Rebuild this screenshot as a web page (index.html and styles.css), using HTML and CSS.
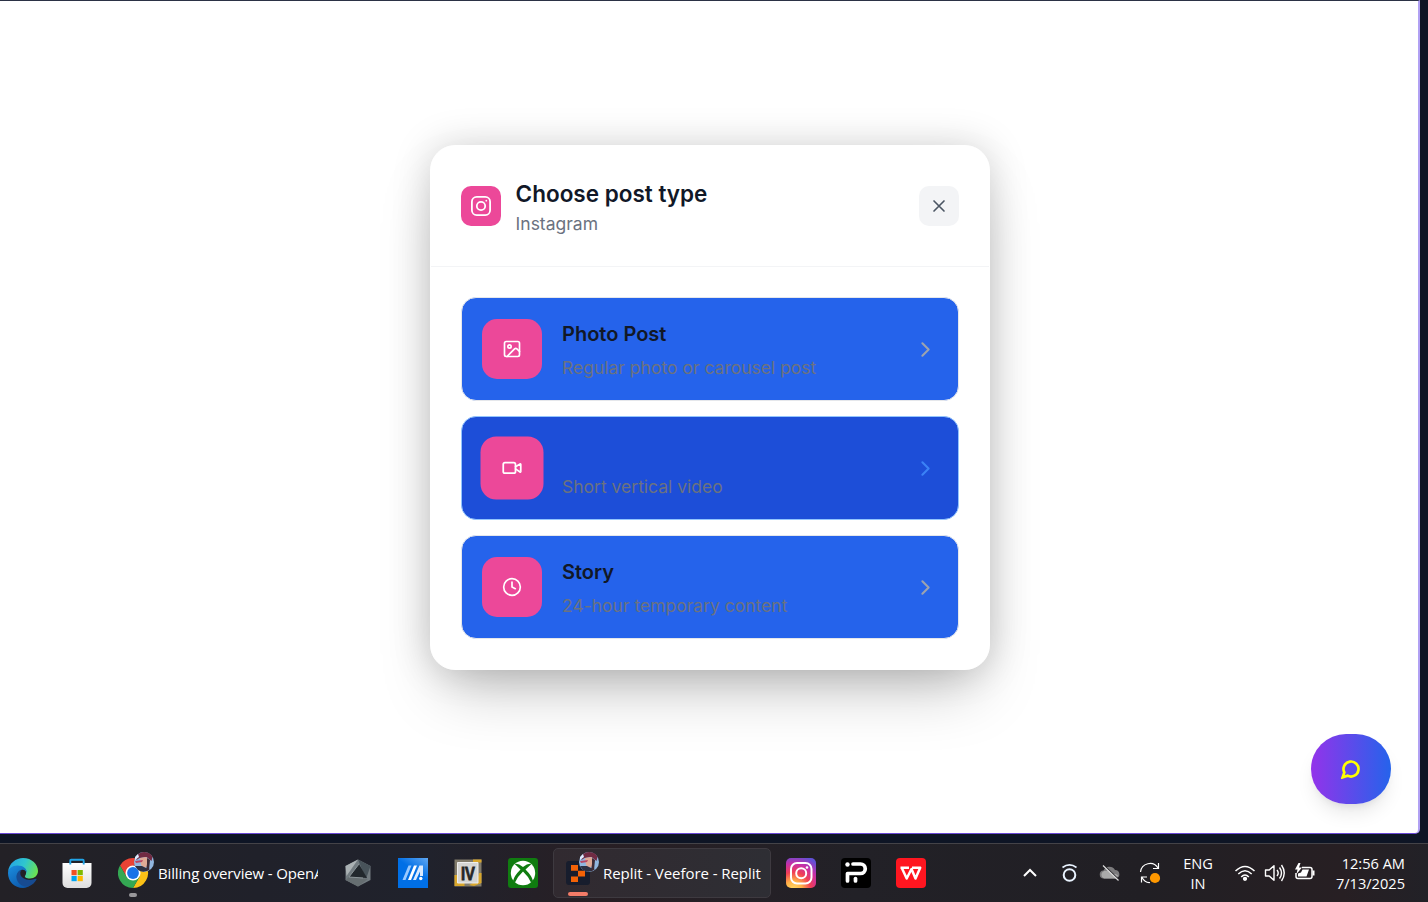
FILE: index.html
```html
<!DOCTYPE html>
<html lang="en">
<head>
<meta charset="utf-8">
<title>Veefore</title>
<link rel="stylesheet" href="styles.css">
</head>
<body>
<main class="viewport">
  <section class="modal">
    <header class="modal-header">
      <span class="brand"><svg width="24" height="24" viewBox="0 0 24 24" class="line"><rect x="2.900" y="2.900" width="18.200" height="18.200" rx="4.800"/><circle cx="12" cy="12" r="4.200"/><path d="M17.300 6.700h.01"/></svg></span>
      <div class="heading"><h1>Choose post type</h1><p>Instagram</p></div>
      <button class="close" aria-label="Close"><svg width="20" height="20" viewBox="0 0 24 24" class="line"><path d="M18 6 6 18M6 6l12 12"/></svg></button>
    </header>
    <div class="options">
      <button class="option">
        <span class="tile"><svg width="20" height="20" viewBox="0 0 24 24" class="line"><rect x="3" y="3" width="18" height="18" rx="2"/><circle cx="9" cy="9" r="2"/><path d="m21 15-3.090-3.090a2 2 0 0 0-2.820 0L6 21"/></svg></span>
        <span class="copy"><strong>Photo Post</strong><small>Regular photo or carousel post</small></span>
        <svg class="line arrow" width="25" height="25" viewBox="0 0 24 24"><path d="m9 18 6-6-6-6"/></svg>
      </button>
      <button class="option active">
        <span class="tile"><svg width="20" height="20" viewBox="0 0 24 24" class="line"><path d="m16 13 5.223 3.482a.5.5 0 0 0 .777-.416V7.870a.5.5 0 0 0-.752-.432L16 10.500"/><rect x="2" y="6" width="14" height="12" rx="2"/></svg></span>
        <span class="copy"><strong>Reel</strong><small>Short vertical video</small></span>
        <svg class="line arrow" width="25" height="25" viewBox="0 0 24 24"><path d="m9 18 6-6-6-6"/></svg>
      </button>
      <button class="option">
        <span class="tile"><svg width="20" height="20" viewBox="0 0 24 24" class="line"><circle cx="12" cy="12" r="10"/><path d="M12 6v6l4 2"/></svg></span>
        <span class="copy"><strong>Story</strong><small>24-hour temporary content</small></span>
        <svg class="line arrow" width="25" height="25" viewBox="0 0 24 24"><path d="m9 18 6-6-6-6"/></svg>
      </button>
    </div>
  </section>
  <button class="chat" aria-label="Chat"><svg width="20" height="20" viewBox="0 0 24 24" class="line"><path d="M7.900 20A9 9 0 1 0 4 16.100L2 22Z"/></svg></button>
</main>

<footer class="taskbar">
  <div class="apps">
    <span class="slot"><svg width="30" height="30" viewBox="0 0 30 30">
      <defs>
        <linearGradient id="edgeTop" x1="0" y1=".3" x2="1" y2=".6"><stop offset="0" stop-color="#25a4e4"/><stop offset=".5" stop-color="#2fc6cf"/><stop offset="1" stop-color="#6be34f"/></linearGradient>
        <linearGradient id="edgeBody" x1="0" y1="0" x2=".7" y2="1"><stop offset="0" stop-color="#1b8fe0"/><stop offset="1" stop-color="#0c56a8"/></linearGradient>
      </defs>
      <path d="M0 14C1 5 8 0 15 0c9 0 15 6.500 15 13 0 4.500-3.500 7.500-8 7.500-4 0-5.500-1.500-5-2.500C20 14 17 9 10 9 5 9 1 11 0 14Z" fill="url(#edgeTop)"/>
      <path d="M0 15C0 11 4 7.500 9.500 7.500c6 0 9.500 3.500 9.500 7.500-1-2.500-3-3.500-5-3.200C10 12.500 8.500 17 10 21c1.500 5 7 7.500 13 5.500C21 28.500 18 30 15 30 6.500 30 0 23.500 0 15Z" fill="url(#edgeBody)"/>
      <path d="M14 11.800c-4 .7-6 4.500-5.500 8.200.8 6 7 9.500 12.500 8.300 3.500-1.500 6-4 7.500-6.800.3-.7-.3-1-.9-.7C21 23.500 12 21 12.300 15c0-1.300.7-2.500 1.700-3.200Z" fill="#174b91"/>
    </svg></span>
    <span class="slot store"><svg width="30" height="30" viewBox="0 0 30 30">
      <defs><linearGradient id="bag" x1="0" y1="0" x2="0" y2="1"><stop offset="0" stop-color="#fff"/><stop offset="1" stop-color="#dedede"/></linearGradient></defs>
      <path d="M.5 5h29v20a5 5 0 0 1-5 5h-19a5 5 0 0 1-5-5Z" fill="url(#bag)"/>
      <path d="M8.300 6.500V2.700q0-.9.900-.9h11.600q.9 0 .9.900v3.800" fill="none" stroke="#21a5e8" stroke-width="1.900"/>
      <path d="M9.500 12h5.200v5.200H9.500Z" fill="#f25022"/><path d="M15.600 12h5.200v5.200h-5.200Z" fill="#7fba00"/><path d="M9.500 18h5.200v5.200H9.500Z" fill="#00a4ef"/><path d="M15.600 18h5.200v5.200h-5.200Z" fill="#ffb900"/>
    </svg></span>
    <span class="task task-chrome">
      <svg class="task-icon" width="38" height="38" viewBox="0 0 38 38">
        <path d="M15 8A15 15 0 0 1 28 15.500H15L8.500 26.800 2 15.500A15 15 0 0 1 15 8Z" fill="#ea4335"/>
        <path d="M28 15.500A15 15 0 0 1 15 38L21.500 26.800 21.500 15.500Z" fill="#fbc116"/>
        <path d="M2 15.500A15 15 0 0 0 15 38L21.500 26.800 8.500 26.800Z" fill="#34a853"/>
        <circle cx="15" cy="23" r="7.500" fill="#fff"/><circle cx="15" cy="23" r="5.900" fill="#1a73e8"/>
        <g id="avatar"><circle cx="26" cy="12" r="10" fill="#91b6df"/><path d="M18.500 6q3-4 8-4 6 .5 8 5l-1 4-5-4-7 1-3 2Z" fill="#712b43"/><path d="m22 8 6-1 3 3-1 6-4 2-3-3Z" fill="#dfa996"/><path d="m17 16 7 0 4 2 4 1q-6 5-12 1Z" fill="#2d3042"/><path d="m29 8 3 2-1 10-3 1 1-7Z" fill="#3e2b36"/><path d="m17 11 8-1-1 2-6 1Z" fill="#b94563"/><path d="m17 7 3-3 1 3-4 3Z" fill="#dcecff"/></g>
      </svg>
      <span class="label label-billing">Billing overview - OpenAI</span><i class="run"></i>
    </span>
    <span class="slot"><svg width="28" height="28" viewBox="0 0 28 28">
      <path d="M14 .5 26.500 7v14L14 27.500 1.500 21V7Z" fill="#727b80"/><path d="M14 .5 1.500 7l1 10Z" fill="#aab1b3"/><path d="m14 .5 12.500 6.500-4.500 13Z" fill="#48535a"/><path d="M15 5 23 19 5 18Z" fill="#22282d"/><path d="m1.500 21 3.500-3 19 2-10 7.500Z" fill="#666e71"/><path d="m15 5-10 13 14 1" fill="none" stroke="#8b9498"/>
    </svg></span>
    <span class="slot"><svg width="30" height="30" viewBox="0 0 30 30">
      <defs><linearGradient id="armoury" x1=".3" y1="1" x2="1" y2="0"><stop offset=".5" stop-color="#006fe6"/><stop offset="1" stop-color="#60a8f3"/></linearGradient></defs>
      <path fill="url(#armoury)" d="M0 0h30v30H0Z"/><path d="M10.500 7.500h3L7.500 22h-3Z" fill="#9bcaff"/><path d="M16 7.500h3L13 22h-3Z" fill="#fff"/><path d="M15 22 21.500 7.500H25V18h-3v-4.500L18 22Z" fill="#d9eaff"/><circle cx="22.800" cy="20.500" r="1.700" fill="#fff"/>
    </svg></span>
    <span class="slot"><svg width="28" height="28" viewBox="0 0 28 28">
      <path fill="#817b6b" d="M.5.500h27v27H.5Z"/><path fill="#d9a72c" d="M.5 16h3v8h7v3H.5ZM19 .5h8.500v3H19ZM25 14h2.500v10L20 27l-5-1 8-4Z"/><path fill="#d5d5d3" d="M3.500 3.500h20.500v20.500H3.500Z"/><path d="M3.500 3.500h20.500v20.500H3.500Z" fill="none" stroke="#eee"/><text x="14" y="20.500" class="game-mark" text-anchor="middle" textLength="14" lengthAdjust="spacingAndGlyphs">IV</text>
    </svg></span>
    <span class="slot"><svg width="30" height="30" viewBox="0 0 30 30">
      <rect width="30" height="30" rx="3" fill="#107c10"/><circle cx="15" cy="15" r="12.200" fill="#fff"/><path d="M6.500 6Q10 5 15 9q5-4 8.500-3L17.500 11.500Q24 18 25 23l-2 1.500Q20 18 15 13.500 10 18 7 24.500L5 23q1-5 7.500-11.500Q9 8 6.500 6Z" fill="#107c10"/>
    </svg></span>
    <span class="task task-replit">
      <svg class="task-icon" width="38" height="38" viewBox="0 0 38 38"><rect x="3" y="11" width="24" height="24" rx="3" fill="#171d2d"/><path d="M8 15h7v5.700H8ZM15 20.700h7v5.700h-7ZM8 26.400h7v5.700H8Z" fill="#f26207"/><use href="#avatar"/></svg>
      <span class="label label-replit">Replit - Veefore - Replit</span><i class="run run-active"></i>
    </span>
    <span class="slot"><svg width="30" height="30" viewBox="0 0 30 30">
      <defs><radialGradient id="insta" cx=".25" cy="1.050" r="1.150"><stop offset="0" stop-color="#ffdc65"/><stop offset=".25" stop-color="#ffb047"/><stop offset=".5" stop-color="#f13e55"/><stop offset=".75" stop-color="#c62fa8"/><stop offset="1" stop-color="#6250d6"/></radialGradient></defs>
      <rect width="30" height="30" rx="5" fill="url(#insta)"/><g fill="none" stroke="#fff" stroke-width="2"><rect x="5" y="5" width="20.500" height="20.500" rx="6"/><circle cx="15.200" cy="15.200" r="5"/></g><circle cx="21" cy="9.500" r="1.300" fill="#fff"/>
    </svg></span>
    <span class="slot"><svg width="30" height="30" viewBox="0 0 30 30"><rect width="30" height="30" rx="4" fill="#000"/><circle cx="6.500" cy="6.500" r="2.200" fill="#fff"/><path d="M12 6h7.500a4.700 4.700 0 0 1 0 9.500H6.500V23" fill="none" stroke="#fff" stroke-width="3.700" stroke-linecap="round" stroke-linejoin="round"/><path d="M14.500 20.500V23" stroke="#fff" stroke-width="3.700" stroke-linecap="round"/></svg></span>
    <span class="slot"><svg width="30" height="30" viewBox="0 0 30 30"><rect width="30" height="30" rx="4" fill="#ff1620"/><path d="M4.500 9.700h8.500M5.800 10l4.900 10.500L15.500 11l4 9.500 4.700-10.800H16" fill="none" stroke="#fff" stroke-width="2.500" stroke-linejoin="round"/></svg></span>
  </div>

  <div class="tray">
    <span class="status"><svg width="20" height="20" viewBox="0 0 20 20"><path d="m4 13 6-6 6 6" fill="none" stroke="#fff" stroke-width="2"/></svg></span>
    <span class="status ring"><svg width="20" height="20" viewBox="0 0 20 20" fill="none" stroke="#e9f3ff"><circle cx="10.500" cy="12" r="5.800" stroke-width="2"/><path d="M3.500 4.500Q10.500-.8 17.500 4.500" stroke-width="1.600"/></svg></span>
    <span class="status"><svg width="22" height="20" viewBox="0 0 22 20"><path d="M5 15.500a4 4 0 0 1-.5-8A6.500 6.500 0 0 1 16 7a4.300 4.300 0 0 1 1 8.500Z" fill="#7c7b7d"/><path d="M5 15.500a4 4 0 0 1 0-7.500q3-1 6 1l3 2.500q3-1.500 5 1-.5 2.500-3 3Z" fill="#aaa"/><path d="m5 2.500 14 13.500" stroke="#211f24" stroke-width="1.500"/><path d="m4 2.500 15.500 15" stroke="#ddd" stroke-width="1.200"/></svg></span>
    <span class="status"><svg width="22" height="22" viewBox="0 0 22 22"><path d="M1.500 10A9.500 9.500 0 0 1 19 6M14 6.500h5.500V1M2.500 20.500V15H8M3 15.500q3 5.500 8 5" fill="none" stroke="#fff" stroke-width="1.200"/><circle cx="16" cy="16" r="5.100" fill="#ff9800"/></svg></span>
    <span class="lang">ENG<br>IN</span>
    <span class="status narrow"><svg width="22" height="20" viewBox="0 0 22 20" fill="none" stroke="#fff" stroke-width="1.500"><path d="M1.500 8q9.500-9 19 0M4.300 11q6.700-6.500 13.400 0M7.200 14q3.800-4 7.600 0"/><circle cx="11" cy="15.800" r="1.400" fill="#fff"/></svg></span>
    <span class="status narrow"><svg width="22" height="20" viewBox="0 0 22 20" fill="none" stroke="#fff" stroke-width="1.400" stroke-linejoin="round"><path d="M1.500 7h3.700L10 2.700v14.600L5.200 13H1.500ZM13 7q2.400 3 0 6M15.500 4.500q4 5.500 0 11M17.500 2q5.500 8 0 16"/></svg></span>
    <span class="status narrow"><svg width="22" height="20" viewBox="0 0 22 20"><path d="M8 4.500h8q2 0 2 2v7q0 2-2 2H4q-2 0-2-2V10" fill="none" stroke="#fff" stroke-width="1.500"/><path d="M8.500 6.500H15L12.500 13.500H4v-3l3-1Z" fill="#fff"/><path d="M18.500 7.500h2v5h-2ZM4.500 0 1 6.500h2.500L2.500 11 8 4.500H5L6.500 0Z" fill="#fff"/></svg></span>
    <span class="clock"><span class="time">12:56 AM</span><span class="date">7/13/2025</span></span>
  </div>
</footer>
</body>
</html>
```
FILE: styles.css
```css
* { box-sizing: border-box; }
body { margin: 0; width: 1428px; height: 902px; overflow: hidden; background: #0e1525; font-family: Inter, "Liberation Sans", sans-serif; display: flex; flex-direction: column; }
button { font: inherit; padding: 0; border: 0; text-align: left; }
h1, p { margin: 0; }
svg { display: block; flex: none; }
.line { fill: none; stroke: currentColor; stroke-width: 2; stroke-linecap: round; stroke-linejoin: round; }
.viewport { position: relative; width: 1420px; height: 834px; flex: none; display: flex; flex-direction: column; align-items: center; padding-top: 144px; background: #fff; border: solid #b1a1f3; border-width: 1px 2px 1px 0; border-top-color: #2b3245; border-bottom-color: #6948d5; border-radius: 0 0 5px 0; }
.modal { width: 560px; height: 525px; margin-left: 2px; border: 1px solid #fff; border-radius: 25px; background: #fff; box-shadow: 0 31px 62px -15px rgba(0,0,0,.25), 0 0 38px rgba(0,0,0,.17); }
.modal-header { height: 121px; padding: 30px; display: flex; align-items: center; border-bottom: 1px solid #f3f4f6; }
.brand { width: 40px; height: 40px; border-radius: 10px; background: #ec4899; color: #fff; display: grid; place-items: center; }
.brand svg { stroke-width: 1.8; }
.heading { margin-left: 14.6px; flex: 1; }
h1 { font-size: 22.5px; line-height: 35px; font-weight: 600; color: #111827; }
.heading p { font-size: 17.5px; line-height: 25px; color: #6b7280; }
.close { width: 40px; height: 40px; border-radius: 10px; background: #f3f4f6; color: #4b5563; display: grid; place-items: center; }
.options { padding: 30px; display: flex; flex-direction: column; gap: 15px; }
.option { height: 104px; padding: 20px; border: 1px solid #e5e7eb; border-radius: 15px; background: #2563eb; display: flex; align-items: center; }
.tile { width: 60px; height: 60px; border-radius: 15px; background: #ec4899; color: #fff; display: grid; place-items: center; }
.copy { display: flex; flex-direction: column; gap: 5px; margin-left: 20px; padding-top: 2px; flex: 1; }
.copy strong { font-size: 20px; line-height: 30px; font-weight: 600; color: #111827; }
.copy small { font-size: 17.5px; line-height: 28px; color: #6b7280; }
.arrow { color: #9ca3af; }
.active { background: #1d4ed8; border-color: #93c5fd; }
.active .tile { transform: scale(1.05); }
.active strong { color: #1d4ed8; }
.active .arrow { color: #3b82f6; }
.chat { position: absolute; right: 27px; bottom: 29px; width: 80px; height: 70px; border-radius: 35px; color: #ff0; background: linear-gradient(90deg, #9333ea, #2563eb); display: grid; place-items: center; box-shadow: 0 12px 19px -4px rgba(0,0,0,.1), 0 5px 8px -5px rgba(0,0,0,.1); }
.chat svg { stroke-width: 3.2; stroke-linejoin: miter; }

.taskbar { height: 59px; flex: none; margin-top: 9px; border-top: 1px solid #444348; background: linear-gradient(90deg, #232126 0, #20212a 18%, #20222c 30%, #281f24 42%, #222127 60%, #211f24 80%, #271f23 94%, #222127); display: flex; justify-content: space-between; color: #fff; font-family: "Open Sans", "Noto Sans", sans-serif; }
.apps { display: flex; align-items: center; margin-left: -5px; }
.slot { width: 55px; display: grid; place-items: center; }
.store { padding-right: 1px; }
.task { position: relative; height: 50px; display: flex; align-items: center; }
.task-icon { margin-top: -8px; }
.task-chrome { width: 225px; padding-left: 13px; }
.task-replit { width: 218px; margin: 0 2px 0 3px; padding-left: 9px; border: 1px solid #3e3a40; border-radius: 5px; background: linear-gradient(90deg, #312a30, #2e2e34); }
.label { font-size: 15px; line-height: 24px; white-space: nowrap; overflow: hidden; letter-spacing: -.06px; }
.label-billing { width: 160px; margin-left: 2px; letter-spacing: -.15px; }
.label-replit { margin-left: 2px; }
.run { position: absolute; left: 24px; bottom: 1px; width: 8px; height: 4px; border-radius: 2px; background: #98979a; }
.run-active { left: 14px; width: 20px; background: #f47c68; }
.game-mark { font: 700 18px "Liberation Sans", sans-serif; fill: #262626; stroke: #262626; stroke-width: .8; }
.tray { display: flex; align-items: center; padding-right: 23px; }
.status { width: 40px; display: grid; place-items: center; }
.narrow { width: 30px; }
.ring { padding-right: 2px; }
.lang { width: 56px; margin-right: 4px; text-align: center; font-size: 14.6px; line-height: 20px; }
.clock { width: 85px; display: flex; flex-direction: column; align-items: flex-end; font-size: 14.6px; line-height: 20px; white-space: nowrap; }
```
